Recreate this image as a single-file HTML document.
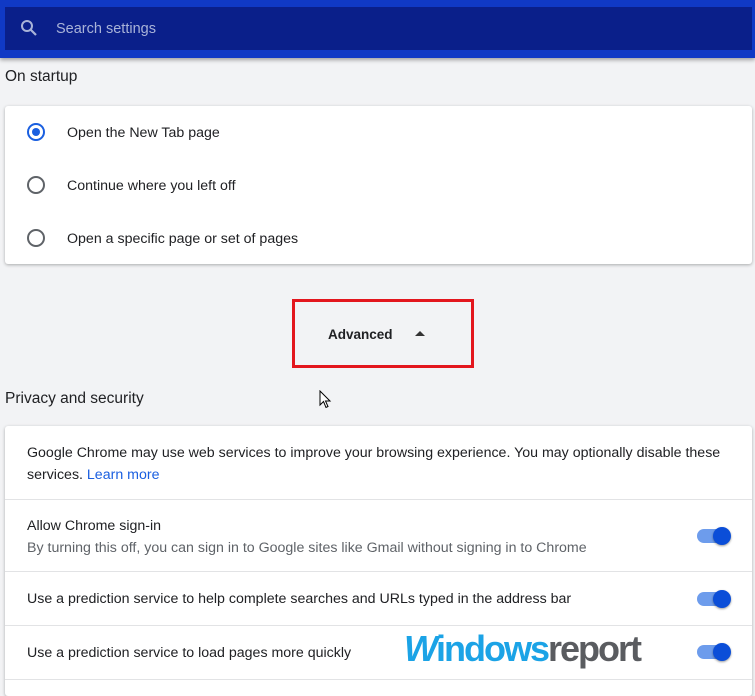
<!DOCTYPE html>
<html><head><style>
body{margin:0;width:755px;height:685px;overflow:hidden;background:#f2f3f5;font-family:"Liberation Sans",Arial,sans-serif;position:relative;color:#202124}
.a{position:absolute}
.hdr{left:0;top:0;width:755px;height:58px;background:#1039c5;box-shadow:0 2px 4px rgba(0,0,0,.35)}
.srch{left:5px;top:7px;width:747px;height:43px;background:#0a1f8a}
.card{background:#fff;left:5px;width:747px;border-radius:3px;box-shadow:0 1px 3px rgba(0,0,0,.3)}
.t{font-size:14.2px;white-space:nowrap}
.radio{width:14px;height:14px;border:2px solid #5f6368;border-radius:50%}
.sep{left:5px;width:747px;height:1px;background:#e2e3e5}
.tg{width:33px;height:14px;border-radius:7px;background:#6d9cec}
.kn{width:18px;height:18px;border-radius:50%;background:#0b4ed8;box-shadow:0 1px 2px rgba(0,0,0,.4)}
</style></head><body>
<div class="a hdr"></div>
<div class="a srch"></div>
<svg class="a" style="left:20px;top:19px" width="18" height="18" viewBox="0 0 18 18"><circle cx="7" cy="7" r="5" fill="none" stroke="#a9b3d8" stroke-width="2"/><path d="M11 11 L16 16" stroke="#a9b3d8" stroke-width="2.2"/></svg>
<div class="a t" style="left:56px;top:21px;color:#a9b3d8;font-size:14.5px">Search settings</div>
<div class="a t" style="left:5px;top:68px;font-size:15.5px">On startup</div>
<div class="a card" style="top:106px;height:158px"></div>
<div class="a radio" style="left:27px;top:123px;border-color:#1a5fe0"></div>
<div class="a" style="left:32px;top:128px;width:8px;height:8px;border-radius:50%;background:#1a5fe0"></div>
<div class="a t" style="left:67px;top:125px">Open the New Tab page</div>
<div class="a radio" style="left:27px;top:176px"></div>
<div class="a t" style="left:67px;top:178px">Continue where you left off</div>
<div class="a radio" style="left:27px;top:229px"></div>
<div class="a t" style="left:67px;top:231px">Open a specific page or set of pages</div>
<div class="a" style="left:292px;top:299px;width:176px;height:63px;border:3px solid #e3161d"></div>
<div class="a t" style="left:328px;top:327px;font-weight:bold;font-size:13.5px">Advanced</div>
<div class="a" style="left:415px;top:331px;width:0;height:0;border-left:5px solid transparent;border-right:5px solid transparent;border-bottom:5px solid #333"></div>
<svg class="a" style="left:319px;top:390px" width="14" height="20" viewBox="0 0 14 20"><path d="M1 1 L1 15 L4.5 11.5 L7 17.5 L9 16.5 L6.5 11 L11 11 Z" fill="#fff" stroke="#000" stroke-width="1"/></svg>
<div class="a t" style="left:5px;top:390px;font-size:15.5px">Privacy and security</div>
<div class="a card" style="top:426px;height:270px"></div>
<div class="a t" style="left:27px;top:445px">Google Chrome may use web services to improve your browsing experience. You may optionally disable these</div>
<div class="a t" style="left:27px;top:467px">services. <span style="color:#1a5fe0">Learn more</span></div>
<div class="a sep" style="top:499px"></div>
<div class="a t" style="left:27px;top:518px">Allow Chrome sign-in</div>
<div class="a t" style="left:27px;top:540px;color:#5f6368">By turning this off, you can sign in to Google sites like Gmail without signing in to Chrome</div>
<div class="a sep" style="top:571px"></div>
<div class="a t" style="left:27px;top:591px">Use a prediction service to help complete searches and URLs typed in the address bar</div>
<div class="a sep" style="top:625px"></div>
<div class="a t" style="left:27px;top:645px">Use a prediction service to load pages more quickly</div>
<div class="a sep" style="top:679px"></div>
<div class="a tg" style="left:697px;top:529px"></div><div class="a kn" style="left:713px;top:527px"></div>
<div class="a tg" style="left:697px;top:592px"></div><div class="a kn" style="left:713px;top:590px"></div>
<div class="a tg" style="left:697px;top:645px"></div><div class="a kn" style="left:713px;top:643px"></div>
<div class="a" style="left:404px;top:628px;font-size:36px;font-weight:bold;letter-spacing:-2px;white-space:nowrap"><span style="color:#1ba3e6;font-style:italic">W</span><span style="color:#1ba3e6">indows</span><span style="color:#5a5c60">report</span></div>
</body></html>
